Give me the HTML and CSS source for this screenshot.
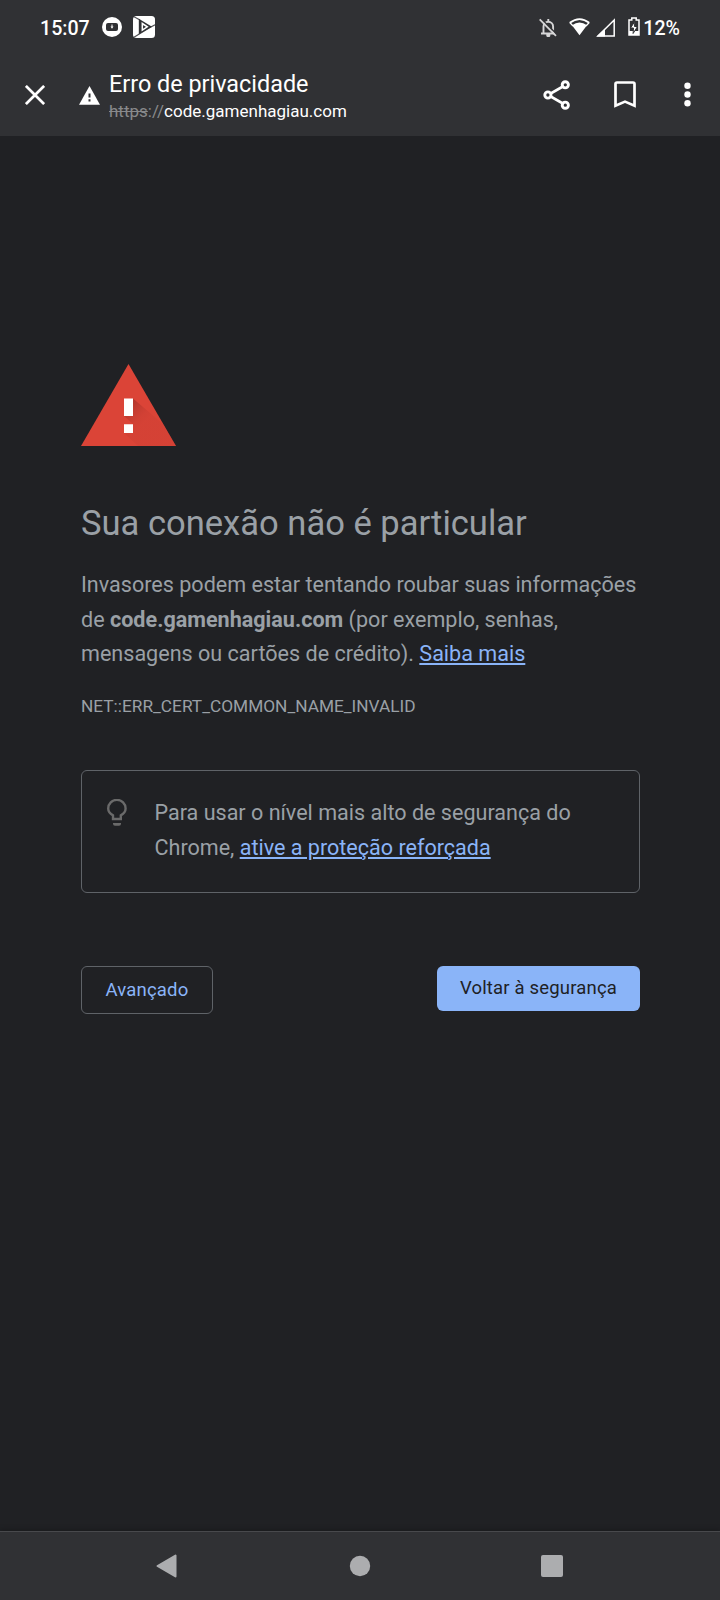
FILE: index.html
```html
<!DOCTYPE html>
<html lang="pt-BR">
<head>
  <meta charset="UTF-8" />
  <meta name="viewport" content="width=device-width, initial-scale=1.0"/>
  <title>Erro de privacidade</title>
  <link rel="stylesheet" href="styles.css">
</head>
<body>
  <header>
    <div class="status-bar">
      <span class="clock">15:07</span>
      <svg class="status-app" width="20" height="20" viewBox="0 0 20 20" aria-hidden="true">
        <circle cx="10" cy="10" r="10" fill="#fff"/>
        <rect x="4" y="6" width="12" height="8" rx="2" fill="#303134"/>
        <path d="M9.500 7.500h1v2h1l-1.500 2.300-1.500-2.300h1z" fill="#fff"/>
      </svg>
      <svg class="status-play" width="22" height="22" viewBox="0 0 22 22" aria-hidden="true">
        <rect width="22" height="22" rx="3.500" fill="#fff"/>
        <path d="M1 .8L7 4M22 8.800L16 12L1 21.200" fill="none" stroke="#505154" stroke-width="1.200"/>
        <path d="M5.800 2.800L19 10.800L5.800 18.300z" fill="#303134"/>
        <path d="M9.300 7.500L14.300 10.800l-5 3.400z" fill="#303134" stroke="#fff" stroke-width="1.500"/>
      </svg>
      <span class="spacer"></span>
      <svg class="status-bell" width="18" height="19" viewBox="0 0 18 19" aria-hidden="true">
        <path d="M2 15.500h13.500M4.500 15V8.500a4.800 4.800 0 0 1 9.600 0V15M9.300 1v3" fill="none" stroke="#d6d6d7" stroke-width="1.900"/>
        <path d="M7.300 16h4v1.200a2 2 0 0 1-4 0z" fill="#d6d6d7"/>
        <path d="M2 .5L18 16.500" stroke="#303134" stroke-width="1.400"/>
        <path d="M.7 1.300L17 17.800" stroke="#d6d6d7" stroke-width="1.800"/>
      </svg>
      <svg class="status-wifi" width="21" height="18" viewBox="0 0 21 18" aria-hidden="true">
        <path d="M.8 4.800Q10.500-2.600 20.200 4.800" fill="none" stroke="#fff" stroke-width="1.700"/>
        <path d="M.8 4.500L4 8M20.200 4.500L17 8" stroke="#fff" stroke-width="1.300"/>
        <path d="M3 7.300Q10.500 1.800 18 7.300L10.500 17.200z" fill="#fff"/>
      </svg>
      <svg class="status-signal" width="19" height="19" viewBox="0 0 19 19" aria-hidden="true">
        <path d="M18.200 2v16H2z" fill="none" stroke="#fff" stroke-width="1.500"/>
        <path d="M9 10.500V18.500H.5z" fill="#fff"/>
      </svg>
      <svg class="status-battery" width="12" height="19" viewBox="0 0 12 19" aria-hidden="true">
        <path d="M1 3h2.800V1h4.400v2H11v15H1z" fill="none" stroke="#fff" stroke-width="1.500"/>
        <path d="M1 14h10v4H1z" fill="#fff"/>
        <path d="M6.800 4.500L2.500 11h3l-.4 5.500L9.500 9.500h-3z" fill="#fff" stroke="#303134" stroke-width="1"/>
      </svg>
      <span class="percent">12%</span>
    </div>

    <div class="toolbar">
      <svg class="close" width="20" height="20" viewBox="0 0 20 20" aria-label="Fechar">
        <path d="M.9.9l18.200 18.200M19.100.9L.9 19.100" stroke="#fff" stroke-width="2.700"/>
      </svg>
      <svg class="insecure" width="21" height="19" viewBox="0 0 21 19" aria-hidden="true">
        <path d="M10.500 0L21 18.700H0z" fill="#fff"/>
        <path d="M9.500 7.500h2v4h-2zM9.500 13.300h2v2.200h-2z" fill="#303134"/>
      </svg>
      <div class="page-info">
        <div class="page-title">Erro de privacidade</div>
        <div class="page-url"><span class="scheme"><s>https</s>://</span>code.gamenhagiau.com</div>
      </div>
      <svg class="share" width="28" height="30" viewBox="0 0 28 30" aria-label="Compartilhar">
        <path d="M22.500 5L5 15l17.500 10" fill="none" stroke="#fff" stroke-width="2.600"/>
        <g fill="#303134" stroke="#fff" stroke-width="2.900">
          <circle cx="22.300" cy="4.800" r="3.100"/>
          <circle cx="4.900" cy="15" r="3.100"/>
          <circle cx="22.300" cy="25.200" r="3.100"/>
        </g>
      </svg>
      <svg class="bookmark" width="22" height="27" viewBox="0 0 22 27" aria-label="Favoritos">
        <path d="M1.500 24.700V3q0-1.500 1.500-1.500h16q1.500 0 1.500 1.500v21.700L11 20.600z" fill="none" stroke="#fff" stroke-width="2.700"/>
      </svg>
      <svg class="more" width="7" height="25" viewBox="0 0 7 25" aria-label="Mais">
        <g fill="#fff">
          <circle cx="3.500" cy="3.700" r="3.200"/>
          <circle cx="3.500" cy="12.500" r="3.200"/>
          <circle cx="3.500" cy="21.300" r="3.200"/>
        </g>
      </svg>
    </div>
  </header>

  <main>
    <svg class="warning-icon" width="95" height="82" viewBox="0 0 95 82" aria-hidden="true">
      <defs>
        <linearGradient id="shade" gradientUnits="userSpaceOnUse" x1="46" y1="44" x2="62" y2="60">
          <stop offset="0" stop-color="#a8322a" stop-opacity=".75"/>
          <stop offset=".7" stop-color="#c63c31" stop-opacity=".45"/>
          <stop offset="1" stop-color="#c63c31" stop-opacity=".3"/>
        </linearGradient>
      </defs>
      <path d="M47.500 0L95 82H0z" fill="#db4437"/>
      <path d="M52 34.500L82 60l13 22H57L43 69l9-9-9-8z" fill="url(#shade)"/>
      <path d="M43 34.500h9V52h-9zM43 60.300h9V69h-9z" fill="#fff"/>
    </svg>

    <h1>Sua conexão não é particular</h1>
    <p>Invasores podem estar tentando roubar suas informações de <strong>code.gamenhagiau.com</strong> (por exemplo, senhas, mensagens ou cartões de crédito). <a href="#">Saiba mais</a></p>
    <div class="error-code">NET::ERR_CERT_COMMON_NAME_INVALID</div>

    <div class="enhanced">
      <svg class="bulb" width="20" height="28" viewBox="0 0 20 28" aria-hidden="true">
        <path d="M6 20v-3.600C3.500 15 1.200 12.700 1.200 9.600a8.700 8.700 0 0 1 17.400 0c0 3.100-2.300 5.400-4.800 6.800V20z" fill="none" stroke="#6a6a6a" stroke-width="2.400"/>
        <path d="M6 24h8v.7q0 2-2 2H8q-2 0-2-2z" fill="#6a6a6a"/>
      </svg>
      <p>Para usar o nível mais alto de segurança do Chrome, <a href="#">ative a proteção reforçada</a></p>
    </div>

    <div class="buttons">
      <button class="details-button">Avançado</button>
      <button class="primary-button">Voltar à segurança</button>
    </div>
  </main>

  <footer>
    <svg width="22" height="24" viewBox="0 0 22 24" aria-label="Voltar">
      <path d="M19.500 1.500v21L1.500 12z" fill="#acadaf" stroke="#acadaf" stroke-width="2" stroke-linejoin="round"/>
    </svg>
    <svg width="22" height="22" viewBox="0 0 22 22" aria-label="Início">
      <circle cx="11" cy="11" r="10.200" fill="#acadaf"/>
    </svg>
    <svg width="22" height="22" viewBox="0 0 22 22" aria-label="Recentes">
      <rect width="22" height="22" rx="2" fill="#acadaf"/>
    </svg>
  </footer>
</body>
</html>
```

FILE: styles.css
```css
/* Basic reset */
* {
  margin: 0;
  padding: 0;
  box-sizing: border-box;
}

body {
  font-family: Roboto, 'Liberation Sans', sans-serif;
  background-color: #202124;
  color: #9aa0a6;
  height: 1600px;
  display: flex;
  flex-direction: column;
}

svg {
  display: block;
  flex-shrink: 0;
}

header {
  background-color: #303134;
  color: white;
  height: 136px;
}

.status-bar {
  height: 54px;
  padding: 0 40px;
  display: flex;
  align-items: center;
}

.clock,
.percent {
  font-size: 19.600px;
  font-weight: 500;
  padding-top: 2px;
}

.clock {
  width: 50px;
  margin-right: 12px;
}

.status-play {
  margin-left: 11px;
}

.spacer {
  flex: 1;
}

.status-wifi {
  margin-left: 12px;
}

.status-signal {
  margin-left: 6px;
}

.status-battery {
  margin-left: 13px;
  margin-right: 3px;
  margin-bottom: 2px;
}

.toolbar {
  height: 82px;
  padding-left: 24.500px;
  padding-right: 29px;
  padding-bottom: 1px;
  display: flex;
  align-items: center;
}

.insecure {
  margin-left: 34.500px;
  margin-right: 9px;
  margin-top: 2px;
}

.page-info {
  flex: 1;
  padding-top: 4px;
}

.page-title {
  font-size: 23.400px;
  line-height: 30px;
}

.page-url {
  font-size: 17px;
  line-height: 25px;
}

.scheme {
  color: #88898b;
}

.bookmark {
  margin-left: 43px;
  margin-right: 48px;
}

main {
  flex: 1;
  padding: 228px 80px 0 81px;
}

h1 {
  font-size: 34.550px;
  font-weight: 400;
  line-height: 42px;
  margin-top: 56px;
  margin-bottom: 24px;
}

p {
  font-size: 21.570px;
  line-height: 34.500px;
}

a {
  color: #8ab4f8;
}

.error-code {
  font-size: 17.270px;
  line-height: 24px;
  margin-top: 22.500px;
}

.enhanced {
  display: flex;
  border: 1px solid #5f6368;
  border-radius: 6px;
  height: 123px;
  margin-top: 52px;
  padding: 25px;
}

.bulb {
  margin-top: 3px;
  margin-right: 27.500px;
}

.enhanced p {
  font-size: 21.550px;
}

.buttons {
  display: flex;
  justify-content: space-between;
  align-items: flex-start;
  margin-top: 73px;
}

button {
  font-family: inherit;
  font-size: 18.500px;
  letter-spacing: 0.18px;
  border-radius: 6px;
  cursor: pointer;
}

.details-button {
  width: 132px;
  height: 48px;
  color: #8ab4f8;
  background: none;
  border: 1px solid #5f6368;
}

.primary-button {
  width: 203px;
  height: 45px;
  padding-bottom: 2px;
  color: #202124;
  background-color: #8ab4f8;
  border: none;
}

footer {
  height: 69px;
  background-color: #303134;
  border-top: 1px solid #48494c;
  box-shadow: 0 -2px 5px rgba(0, 0, 0, 0.2);
  display: flex;
  justify-content: space-between;
  align-items: center;
  padding: 0 157px 0 156px;
}
```
